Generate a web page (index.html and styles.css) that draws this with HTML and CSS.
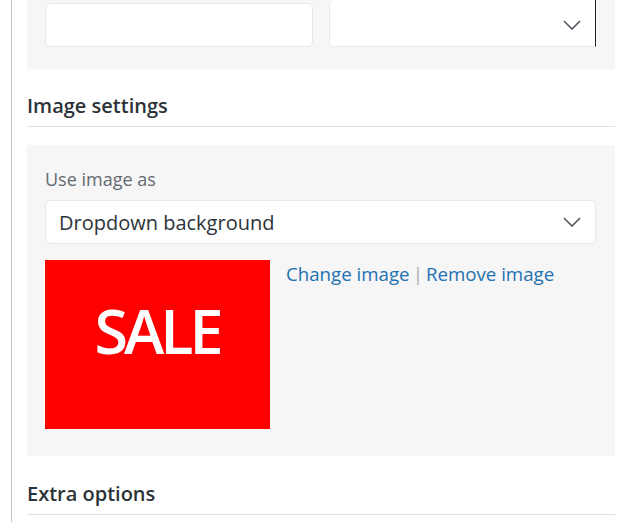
FILE: index.html
```html
<!DOCTYPE html>
<html>
<head>
<meta charset="utf-8">
<link rel="stylesheet" href="styles.css">
</head>
<body>
<div class="sidebar">
  <div class="panel panel-top">
    <div class="row2">
      <div class="field"></div>
      <div class="field select select-focus">
        <svg class="chev" width="18" height="10" viewBox="0 0 18 10"><path d="M1 1 L9 9 L17 1" fill="none" stroke="#50575e" stroke-width="1.6"/></svg>
      </div>
    </div>
  </div>

  <h2 class="section-title">Image settings</h2>

  <div class="panel panel-image">
    <label class="label">Use image as</label>
    <div class="field select select-wide">
      <span class="select-text">Dropdown background</span>
      <svg class="chev" width="18" height="10" viewBox="0 0 18 10"><path d="M1 1 L9 9 L17 1" fill="none" stroke="#50575e" stroke-width="1.6"/></svg>
    </div>
    <div class="image-row">
      <div class="sale"><span>SALE</span></div>
      <div class="links"><a class="link">Change image</a><span class="sep">|</span><a class="link">Remove image</a></div>
    </div>
  </div>

  <h2 class="section-title section-last">Extra options</h2>
</div>
</body>
</html>
```
FILE: styles.css
```css
html, body {
  margin: 0;
  padding: 0;
  background: #ffffff;
  font-family: "Open Sans", "Noto Sans", sans-serif;
  color: #2c3338;
}
.sidebar {
  margin-left: 11px;
  border-left: 1px solid #c3c4c7;
  padding-left: 15px;
  width: 588px;
  min-height: 522px;
}
.panel {
  background: #f6f6f6;
  padding: 0 19px 0 18px;
}
.panel-top {
  padding-top: 3px;
  padding-bottom: 22px;
}
.row2 {
  display: grid;
  grid-template-columns: 268px 267px;
  gap: 16px;
}
.field {
  height: 44px;
  box-sizing: border-box;
  background: #fff;
  border: 1px solid #e8e8e8;
  border-radius: 5px;
  position: relative;
}
.select {
  display: flex;
  align-items: center;
  justify-content: space-between;
  padding: 0 14px 0 13px;
}
.select-focus {
  justify-content: flex-end;
  border-right: 1px solid #1d2327;
  border-top-right-radius: 0;
  border-bottom-right-radius: 0;
  margin-top: -3px;
  height: 47px;
  padding-top: 3px;
  border-top: none;
}
.chev {
  display: block;
}
.section-title {
  margin: 0;
  font-size: 20px;
  font-weight: 600;
  color: #2c3338;
  padding: 23px 0 6px;
  line-height: 28px;
  border-bottom: 1px solid #e0e0e0;
  margin-bottom: 18px;
}
.section-last {
  padding-top: 24px;
}
.panel-image {
  padding-top: 22px;
  padding-bottom: 27px;
}
.label {
  display: block;
  font-size: 18px;
  color: #646970;
  line-height: 24px;
  margin-bottom: 9px;
}
.select-wide {
  height: 44px;
}
.select-text {
  font-size: 20px;
  color: #2c3338;
}
.image-row {
  display: flex;
  align-items: flex-start;
  gap: 16px;
  margin-top: 16px;
}
.sale {
  width: 225px;
  height: 169px;
  background: #ff0000;
  display: flex;
  justify-content: center;
  padding-top: 36px;
  box-sizing: border-box;
}
.sale span {
  color: #fff;
  font-family: "Open Sans", "Noto Sans", sans-serif;
  font-weight: 600;
  font-size: 61px;
  line-height: 70px;
  letter-spacing: -4px;
  margin-right: 1px;
}
.links {
  font-size: 18.7px;
  line-height: 26px;
  margin-top: 1px;
}
.link {
  color: #2271b1;
  text-decoration: none;
}
.sep {
  color: #a7aaad;
  margin: 0 3px;
}
```
